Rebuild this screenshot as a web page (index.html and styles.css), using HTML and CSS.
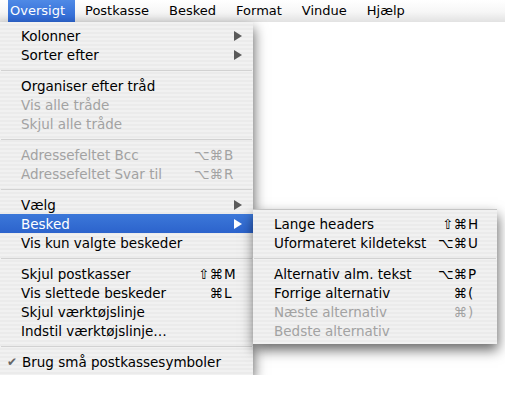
FILE: index.html
```html
<!DOCTYPE html>
<html>
<head>
<meta http-equiv="Content-Type" content="text/html; charset=utf-8"/>
<title>Oversigt</title>
<link rel="stylesheet" href="styles.css">
</head>
<body>

<div class="menubar">
  <span class="title first open">Oversigt</span>
  <span class="title">Postkasse</span>
  <span class="title">Besked</span>
  <span class="title">Format</span>
  <span class="title">Vindue</span>
  <span class="title">Hjælp</span>
</div>

<div class="menu main">
  <div class="item"><span class="label">Kolonner</span><svg class="arrow" viewBox="0 0 8 10"><path d="M0 0 L8 5 L0 10 Z"/></svg></div>
  <div class="item"><span class="label">Sorter efter</span><svg class="arrow" viewBox="0 0 8 10"><path d="M0 0 L8 5 L0 10 Z"/></svg></div>
  <div class="sep"></div>
  <div class="item"><span class="label">Organiser efter tråd</span></div>
  <div class="item off"><span class="label">Vis alle tråde</span></div>
  <div class="item off"><span class="label">Skjul alle tråde</span></div>
  <div class="sep"></div>
  <div class="item off"><span class="label">Adressefeltet Bcc</span><span class="keys"><span class="mods">⌥⌘</span><span class="key">B</span></span></div>
  <div class="item off"><span class="label">Adressefeltet Svar til</span><span class="keys"><span class="mods">⌥⌘</span><span class="key">R</span></span></div>
  <div class="sep"></div>
  <div class="item"><span class="label">Vælg</span><svg class="arrow" viewBox="0 0 8 10"><path d="M0 0 L8 5 L0 10 Z"/></svg></div>
  <div class="item active">
    <span class="label">Besked</span><svg class="arrow" viewBox="0 0 8 10"><path d="M0 0 L8 5 L0 10 Z"/></svg>

    <div class="menu sub">
      <div class="item"><span class="label">Lange headers</span><span class="keys"><span class="mods">⇧⌘</span><span class="key">H</span></span></div>
      <div class="item"><span class="label">Uformateret kildetekst</span><span class="keys"><span class="mods">⌥⌘</span><span class="key">U</span></span></div>
      <div class="sep"></div>
      <div class="item"><span class="label">Alternativ alm. tekst</span><span class="keys"><span class="mods">⌥⌘</span><span class="key">P</span></span></div>
      <div class="item"><span class="label">Forrige alternativ</span><span class="keys"><span class="mods">⌘</span><span class="key">(</span></span></div>
      <div class="item off"><span class="label">Næste alternativ</span><span class="keys"><span class="mods">⌘</span><span class="key">)</span></span></div>
      <div class="item off"><span class="label">Bedste alternativ</span></div>
    </div>
  </div>
  <div class="item"><span class="label">Vis kun valgte beskeder</span></div>
  <div class="sep"></div>
  <div class="item"><span class="label">Skjul postkasser</span><span class="keys"><span class="mods">⇧⌘</span><span class="key">M</span></span></div>
  <div class="item"><span class="label">Vis slettede beskeder</span><span class="keys"><span class="mods">⌘</span><span class="key">L</span></span></div>
  <div class="item"><span class="label">Skjul værktøjslinje</span></div>
  <div class="item"><span class="label">Indstil værktøjslinje…</span></div>
  <div class="sep"></div>
  <div class="item checked"><span class="label">Brug små postkassesymboler</span></div>
</div>

</body>
</html>
```

FILE: styles.css
```css
body {
  margin: 0;
  background-color: white;
  font-family: "DejaVu Sans", "Liberation Sans", sans-serif;
  font-size: 13px;
  color: #000;
}

/* top bar */
.menubar {
  display: flex;
  height: 22px;
  line-height: 21px;
  padding-left: 8px;
  background: linear-gradient(#ffffff, #f6f6f6 55%, #e2e2e2);
}

.title {
  padding: 0 10px;
}

.title.first {
  padding: 0 10px 0 2px;
}

.title.open {
  color: white;
  background: linear-gradient(#4f8ae6, #2d66d3);
}

/* menus */
.menu {
  width: 253px;
  box-sizing: border-box;
  padding: 4px 0;
  font-size: 13.5px;
  background: repeating-linear-gradient(#f1f1f1 0, #f1f1f1 2px, #ebebeb 2px, #ebebeb 4px);
  box-shadow: 1px 6px 12px rgba(0, 0, 0, 0.6);
}

.main {
  position: relative;
}

.sub {
  position: absolute;
  left: 100%;
  top: -5px;
  width: 244px;
  border-top: 1px solid #c4c4c4;
  z-index: 2;
}

.item {
  position: relative;
  display: flex;
  align-items: center;
  height: 19px;
  padding: 0 11px 0 21px;
  white-space: nowrap;
}

.sub .item {
  padding: 0 14px 0 21px;
}

.label {
  flex: 1;
}

.off {
  color: #a2a2a2;
}

.active {
  color: white;
  background: linear-gradient(#3c78d9, #2c63cc);
}

.active > .arrow {
  fill: white;
}

.sub .item {
  color: #000;
}

.sub .item.off {
  color: #a2a2a2;
}

.arrow {
  width: 8px;
  height: 10px;
  fill: #5a5a5a;
}

.keys {
  display: flex;
}

.mods {
  text-align: right;
}

.key {
  width: 18px;
  padding-left: 1px;
}

.sub .key {
  width: 15px;
}

.checked::before {
  content: "\2714";
  width: 15px;
  margin-left: -14px;
  color: #666;
  font-size: 12px;
}

.sep {
  height: 12px;
  display: flex;
  align-items: center;
  padding: 0 1px;
}

.sep::after {
  content: "";
  flex: 1;
  height: 1px;
  background: #d2d2d2;
}
```
